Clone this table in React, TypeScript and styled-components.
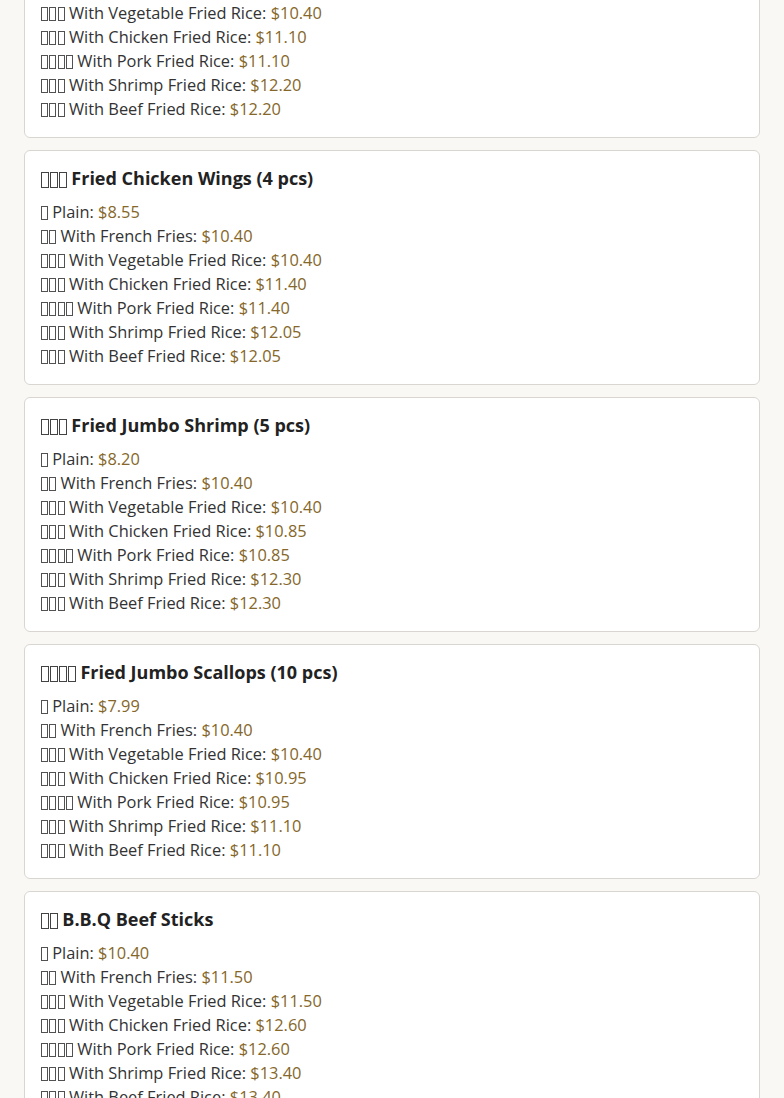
import React from "react";
import styled, { createGlobalStyle } from "styled-components";

const GlobalStyle = createGlobalStyle`
  html, body { margin: 0; padding: 0; background: #faf8f5; }
  body { font-family: "Open Sans", "Noto Sans", sans-serif; color: #333; }
`;

const Page = styled.main`
  display: flex;
  flex-direction: column;
  gap: 12px;
  padding: 0 24px 24px;
  margin-top: -97px;
`;

const Card = styled.section`
  background: #fff;
  border: 1px solid #d9d6d2;
  border-radius: 6px;
  padding: 16px;
  display: flex;
  flex-direction: column;
  gap: 11px;
`;

const Title = styled.h3`
  margin: 0;
  font-size: 18px;
  line-height: 22px;
  font-weight: 700;
  color: #222;
  white-space: nowrap;
`;

const List = styled.ul`
  list-style: none;
  margin: 0;
  padding: 0;
`;

const Item = styled.li`
  font-size: 16.4px;
  line-height: 24px;
  color: #333;
  white-space: nowrap;
`;

const Price = styled.span`
  color: #85672a;
`;

const Glyphs = styled.span`
  display: inline-flex;
  gap: 1.5px;
  vertical-align: -0.14em;
`;

const Glyph = styled.span`
  display: inline-block;
  box-sizing: border-box;
  width: 0.42em;
  height: 0.88em;
  border: 1px solid currentColor;
  opacity: 0.85;
`;

function Tofu({ n }: { n: number }) {
  return (
    <Glyphs aria-hidden>
      {Array.from({ length: n }, (_, i) => (
        <Glyph key={i} />
      ))}
    </Glyphs>
  );
}

type Opt = { icon: number; label: string; price: string };
type Dish = { icon: number; name: string; options: Opt[] };

const opts = (prices: string[]): Opt[] => [
  { icon: 1, label: "Plain", price: prices[0] },
  { icon: 2, label: "With French Fries", price: prices[1] },
  { icon: 3, label: "With Vegetable Fried Rice", price: prices[2] },
  { icon: 3, label: "With Chicken Fried Rice", price: prices[3] },
  { icon: 4, label: "With Pork Fried Rice", price: prices[4] },
  { icon: 3, label: "With Shrimp Fried Rice", price: prices[5] },
  { icon: 3, label: "With Beef Fried Rice", price: prices[6] },
];

const dishes: Dish[] = [
  { icon: 3, name: "Fried Fish", options: opts(["$8.20", "$10.40", "$10.40", "$11.10", "$11.10", "$12.20", "$12.20"]) },
  { icon: 3, name: "Fried Chicken Wings (4 pcs)", options: opts(["$8.55", "$10.40", "$10.40", "$11.40", "$11.40", "$12.05", "$12.05"]) },
  { icon: 3, name: "Fried Jumbo Shrimp (5 pcs)", options: opts(["$8.20", "$10.40", "$10.40", "$10.85", "$10.85", "$12.30", "$12.30"]) },
  { icon: 4, name: "Fried Jumbo Scallops (10 pcs)", options: opts(["$7.99", "$10.40", "$10.40", "$10.95", "$10.95", "$11.10", "$11.10"]) },
  { icon: 2, name: "B.B.Q Beef Sticks", options: opts(["$10.40", "$11.50", "$11.50", "$12.60", "$12.60", "$13.40", "$13.40"]) },
];

export default function App() {
  return (
    <>
      <GlobalStyle />
      <Page>
        {dishes.map((d) => (
          <Card key={d.name}>
            <Title>
              <Tofu n={d.icon} /> {d.name}
            </Title>
            <List>
              {d.options.map((o) => (
                <Item key={o.label}>
                  <Tofu n={o.icon} /> {o.label}: <Price>{o.price}</Price>
                </Item>
              ))}
            </List>
          </Card>
        ))}
      </Page>
    </>
  );
}
